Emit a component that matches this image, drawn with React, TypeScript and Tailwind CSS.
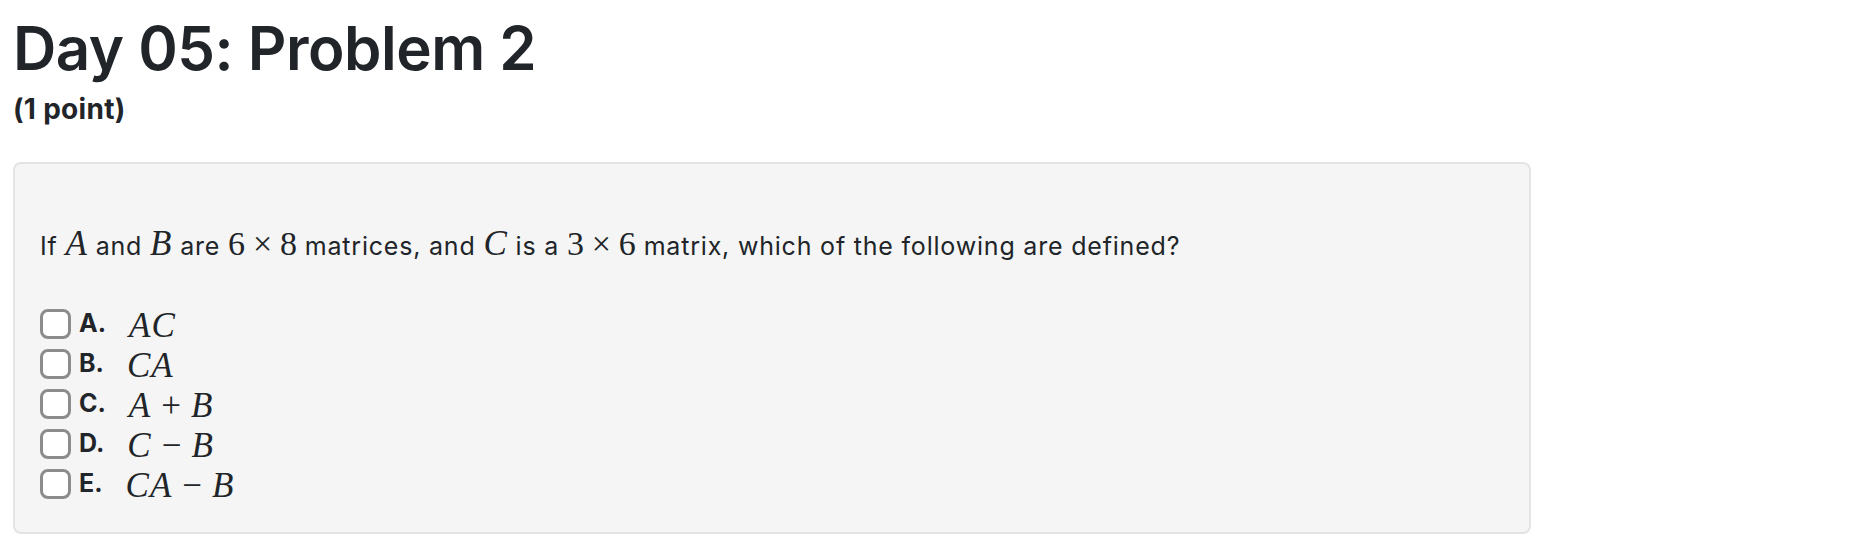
const sans = "font-['Inter','Liberation_Sans',sans-serif]";
const serif = "font-['Liberation_Serif','DejaVu_Serif',serif]";

const options = [
  { key: 'A', expr: 'AC' },
  { key: 'B', expr: 'CA' },
  { key: 'C', expr: 'A + B' },
  { key: 'D', expr: 'C − B' },
  { key: 'E', expr: 'CA − B' },
];

// italic math variable
function M({ children }: { children: React.ReactNode }) {
  return <span className={`${serif} italic text-[35px] leading-none tracking-[1px]`}>{children}</span>;
}

// upright math (numbers, ×)
function N({ children }: { children: React.ReactNode }) {
  return <span className={`${serif} text-[34px] leading-none tracking-normal`}>{children}</span>;
}

function Expr({ text }: { text: string }) {
  const parts = text.split(' ');
  return (
    <span className="flex items-baseline">
      {parts.map((p, i) =>
        p === '+' || p === '−' ? (
          <span key={i} className={`${serif} text-[35px] leading-none px-[10px]`}>
            {p}
          </span>
        ) : (
          <M key={i}>{p}</M>
        ),
      )}
    </span>
  );
}

export default function App() {
  return (
    <div className={`${sans} text-[#212529] px-[13px] pt-[12px] bg-white min-h-[557px]`}>
      <h1 className="text-[60px] font-semibold leading-[72px] tracking-[-0.5px]">Day 05: Problem 2</h1>
      <div className="mt-[7px] text-[28px] font-bold leading-[36px] tracking-[0.3px]">(1 point)</div>

      <div className="mt-[35px] w-[1518px] rounded-[8px] border-2 border-[#e4e4e4] bg-[#f5f5f5] pl-[25px] pt-[62px] pb-[28px]">
        <p className="text-[25px] leading-[36px] tracking-[0.8px]">
          If <M>A</M> and <M>B</M> are <N>6</N>&nbsp;<N>×</N>&nbsp;<N>8</N> matrices, and <M>C</M> is a{' '}
          <N>3</N>&nbsp;<N>×</N>&nbsp;<N>6</N> matrix, which of the following are defined?
        </p>

        <div className="mt-[40px] flex flex-col">
          {options.map((o) => (
            <label key={o.key} className="flex h-[40px] items-center">
              <span className="h-[30px] w-[31px] shrink-0 rounded-[8px] border-[3px] border-[#8c8c8c] bg-white" />
              <span className="ml-[8px] text-[25px] font-bold">{o.key}.</span>
              <span className="ml-[23px] flex items-center pt-[2px]">
                <Expr text={o.expr} />
              </span>
            </label>
          ))}
        </div>
      </div>
    </div>
  );
}
